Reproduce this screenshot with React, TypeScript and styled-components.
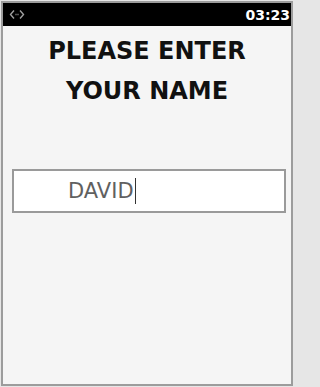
import styled, { createGlobalStyle } from 'styled-components';

const Global = createGlobalStyle`
  html, body {
    margin: 0;
    padding: 0;
    background: #e6e6e6;
  }
  body {
    font-family: "DejaVu Sans", "Noto Sans", sans-serif;
  }
`;

const Screen = styled.div`
  box-sizing: border-box;
  margin: 1px 0 0 1px;
  width: 292px;
  height: 385px;
  border: 2px solid #9c9c9c;
  background: #f5f5f5;
  display: flex;
  flex-direction: column;
`;

const StatusBar = styled.div`
  height: 23px;
  background: #000;
  display: flex;
  align-items: center;
  justify-content: space-between;
  padding: 0 1px 0 6px;
`;

const Clock = styled.span`
  color: #fff;
  font-size: 14px;
  font-weight: 700;
`;

const Title = styled.h1`
  margin: 5px 0 0;
  text-align: center;
  font-size: 24px;
  font-weight: 700;
  line-height: 40px;
  color: #111;
`;

const Field = styled.div`
  box-sizing: border-box;
  margin: 58px 5px 0 9px;
  height: 44px;
  border: 2px solid #9a9a9a;
  background: #fff;
  display: flex;
  align-items: center;
  padding-left: 54px;
  font-size: 21px;
  color: #606060;
`;

const Caret = styled.span`
  display: inline-block;
  width: 1px;
  height: 26px;
  margin-left: 1px;
  background: #333;
`;

function LinkIcon() {
  return (
    <svg width="16" height="11" viewBox="0 0 16 11" fill="none" stroke="#a0a0a0" strokeWidth="1.4">
      <path d="M5 1.5 L1.5 5.5 L5 9.5" />
      <path d="M11 1.5 L14.5 5.5 L11 9.5" />
      <path d="M6.5 5.5 H9.5" strokeDasharray="1 1" />
    </svg>
  );
}

export default function App() {
  return (
    <>
      <Global />
      <Screen>
        <StatusBar>
          <LinkIcon />
          <Clock>03:23</Clock>
        </StatusBar>
        <Title>
          PLEASE ENTER
          <br />
          YOUR NAME
        </Title>
        <Field>
          DAVID
          <Caret />
        </Field>
      </Screen>
    </>
  );
}
